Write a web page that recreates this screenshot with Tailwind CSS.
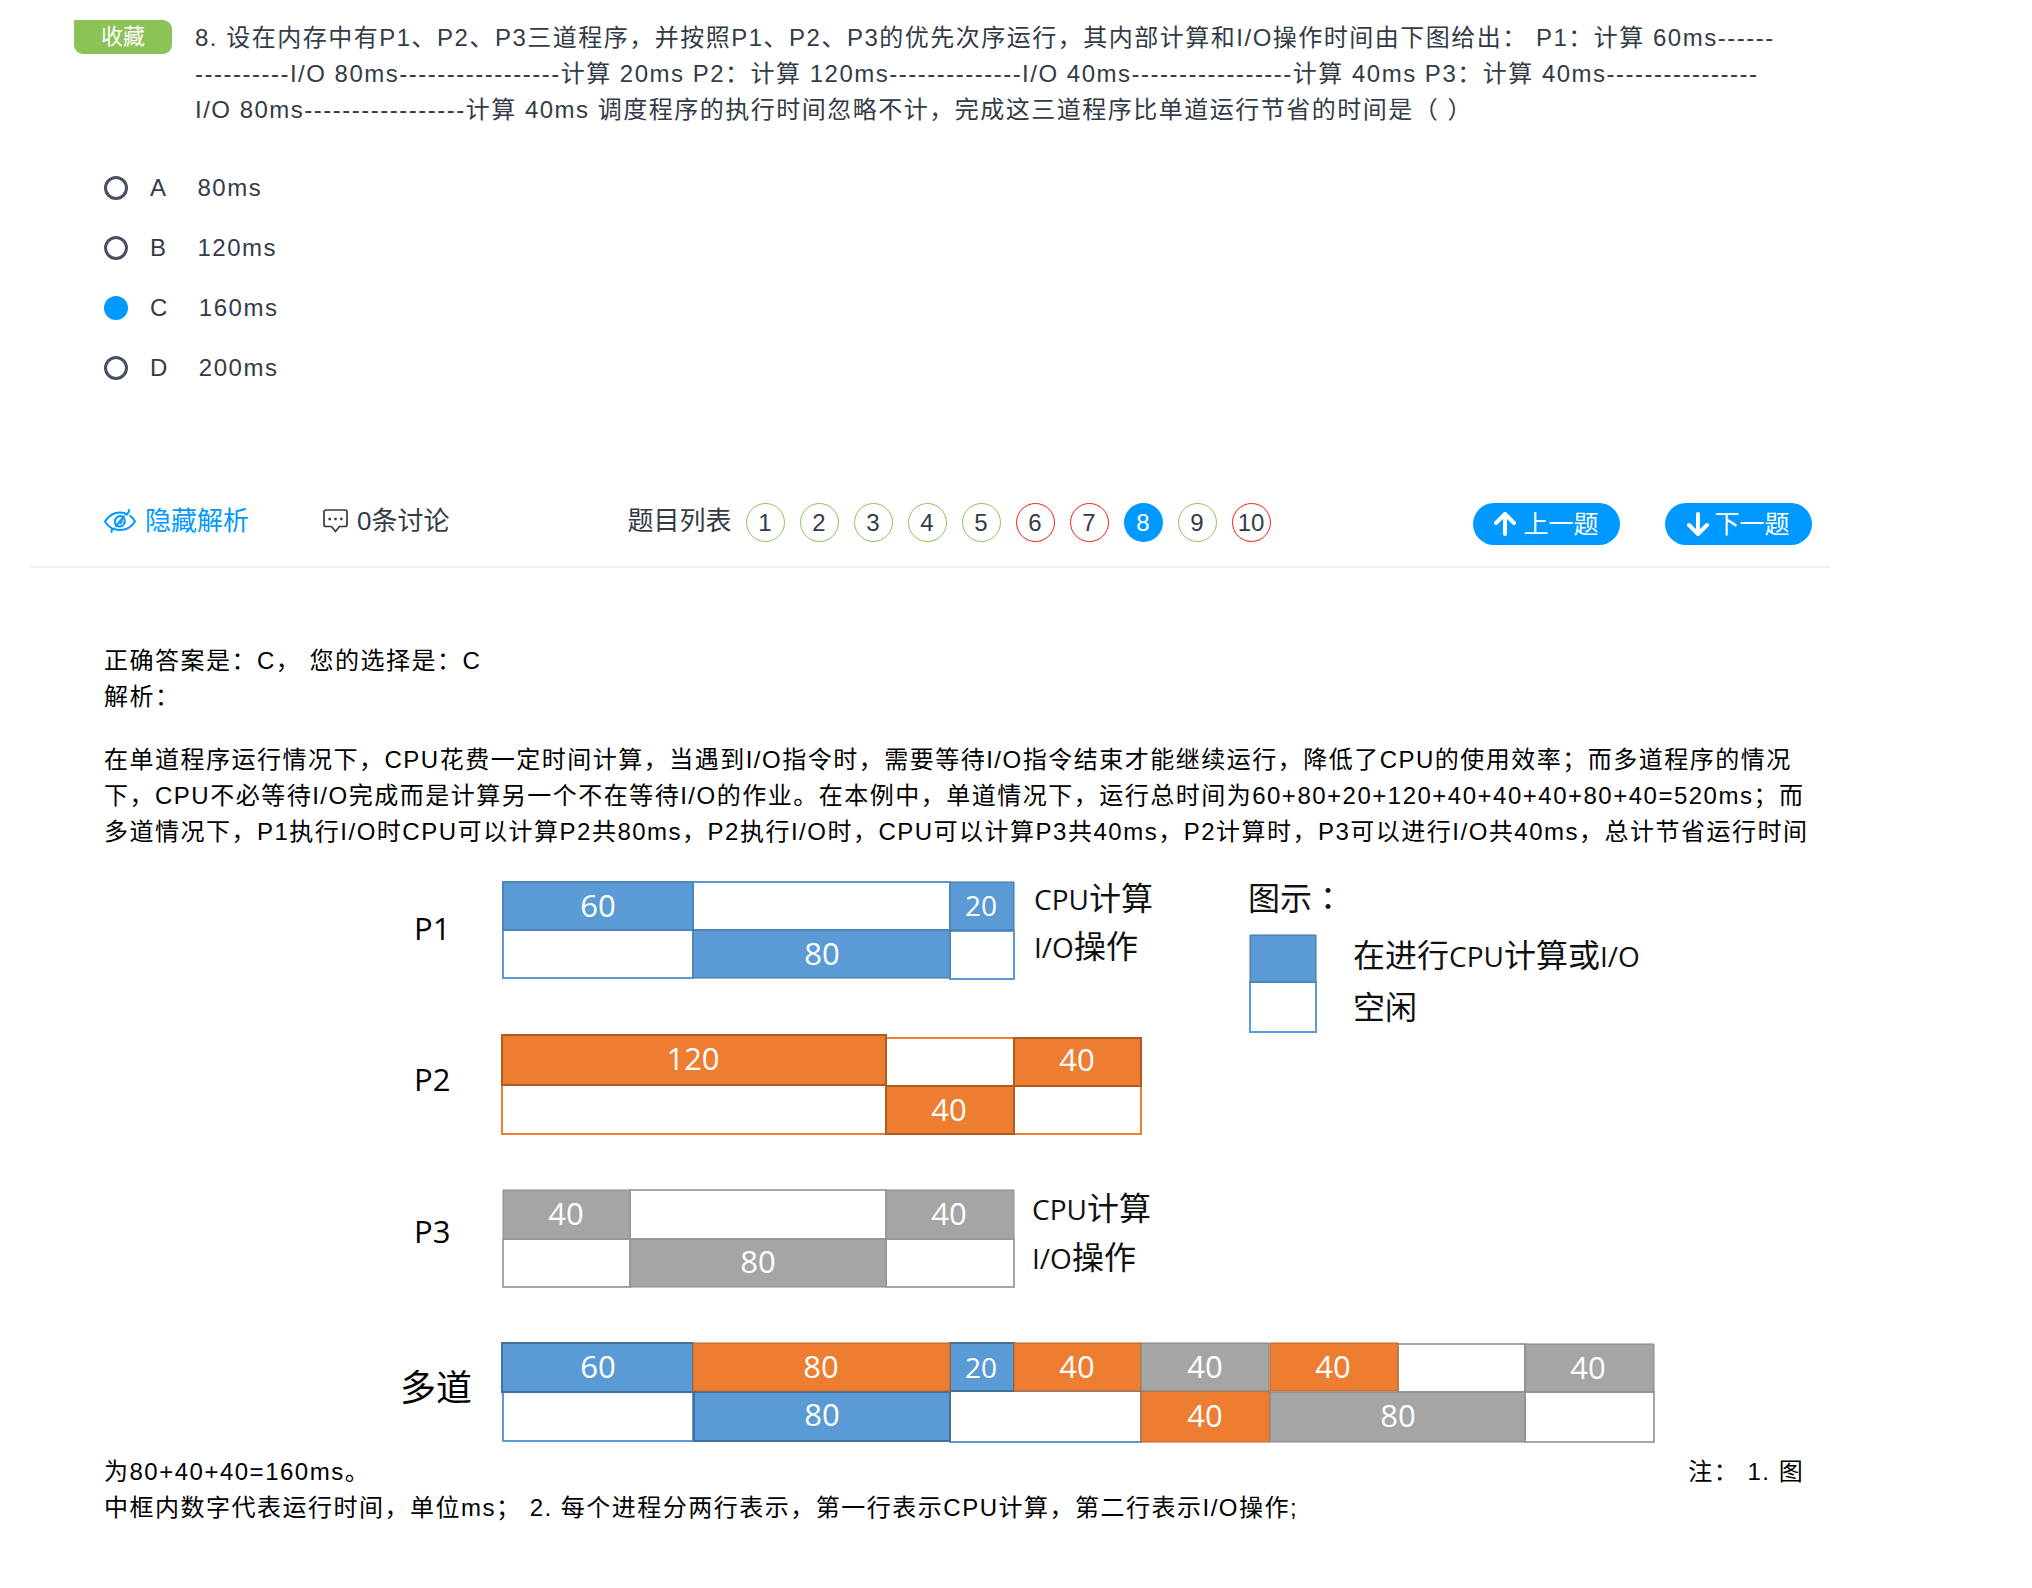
<!DOCTYPE html>
<html lang="zh-CN">
<head>
<meta charset="utf-8">
<meta name="viewport" content="width=device-width, initial-scale=1">
<title>题目解析</title>
<script src="https://cdn.jsdelivr.net/npm/@tailwindcss/browser@4"></script>
</head>
<body class="bg-white font-['Liberation_Sans','Noto_Sans_CJK_SC',sans-serif] text-[24px] leading-9 text-[#333b47]">
<main class="ml-[30px] max-w-[1800px] pb-12 pt-5">

  <!-- Question -->
  <section class="flex items-start gap-[23px] pl-11 pr-[54px]">
    <button type="button" class="h-[34px] w-[98px] shrink-0 rounded-[9px] rounded-tl-none bg-[#8bc356] text-[22px] leading-[34px] text-white">收藏</button>
    <p class="tracking-[0.0625em]">8. 设在内存中有P1、P2、P3三道程序，并按照P1、P2、P3的优先次序运行，其内部计算和I/O操作时间由下图给出： P1：计算 60ms----------------I/O 80ms-----------------计算 20ms P2：计算 120ms--------------I/O 40ms-----------------计算 40ms P3：计算 40ms----------------<wbr>I/O 80ms-----------------计算 40ms 调度程序的执行时间忽略不计，完成这三道程序比单道运行节省的时间是（ ）</p>
  </section>

  <!-- Options -->
  <fieldset class="mt-[42px] flex flex-col gap-6 pl-[74px] tracking-[0.0625em]">
    <label class="flex items-center"><input type="radio" name="answer" class="mr-[22px] size-6 appearance-none rounded-full border-3 border-[#4a5061] checked:border-[#0099ff] checked:bg-[#0099ff]"><span class="mr-[30px]">A</span>80ms</label>
    <label class="flex items-center"><input type="radio" name="answer" class="mr-[22px] size-6 appearance-none rounded-full border-3 border-[#4a5061] checked:border-[#0099ff] checked:bg-[#0099ff]"><span class="mr-[30px]">B</span>120ms</label>
    <label class="flex items-center"><input type="radio" name="answer" checked class="mr-[22px] size-6 appearance-none rounded-full border-3 border-[#4a5061] checked:border-[#0099ff] checked:bg-[#0099ff]"><span class="mr-[30px]">C</span>160ms</label>
    <label class="flex items-center"><input type="radio" name="answer" class="mr-[22px] size-6 appearance-none rounded-full border-3 border-[#4a5061] checked:border-[#0099ff] checked:bg-[#0099ff]"><span class="mr-[30px]">D</span>200ms</label>
  </fieldset>

  <!-- Toolbar -->
  <nav class="mt-[117px] flex h-[65px] items-start border-b-2 border-[#f0f0f0] pl-[74px] pr-[18px] text-[26px]">
    <button type="button" class="flex items-center gap-[9px] text-[#0099ff]">
      <svg class="h-6 w-8" viewBox="0 0 32 24" fill="none" stroke="currentColor" stroke-width="2" stroke-linecap="round"><path d="M23.500 5.500C21.500 4.200 19 3.500 16 3.500 9.500 3.500 4.500 7 1 12.500c1.800 3 4 5.200 6.500 6.700M26 6.800c2 1.500 3.600 3.400 5 5.700C27.500 18 22.500 21 16 21c-2.200 0-4.200-.4-6-1.100M25 1l-.5 2.500-3 2M20 7.500 12 17M10.500 19.500l-2.500 1L7.500 23"/><path d="M18.500 7.500c-4-1.500-7.500 1.500-7.500 5 0 1.200.2 2.200.8 3.100M20.300 9.700c1.500 4-.8 7.800-4.300 7.800-.8 0-1.500-.2-2.100-.5M16.500 14.500l1.500-2.200"/></svg>
      <span>隐藏解析</span>
    </button>
    <a href="#discuss" class="ml-[74px] flex items-center gap-[9px]">
      <svg class="h-6 w-[25px]" viewBox="0 0 25 24" fill="none" stroke="currentColor" stroke-width="1.700" stroke-linejoin="round"><path d="M3 1h19a2 2 0 0 1 2 2v12.500a2 2 0 0 1-2 2h-5.500L12.500 22.500 8.500 17.500H3a2 2 0 0 1-2-2V3a2 2 0 0 1 2-2z"/><path d="M5.500 8.800h2.400v2.400H5.500zM11.300 8.800h2.400v2.400h-2.400zM17.100 8.800h2.400v2.400h-2.400z" fill="currentColor" stroke="none"/></svg>
      <span>0条讨论</span>
    </a>
    <span class="ml-[178px]">题目列表</span>
    <ol class="ml-[14px] flex gap-[15px] text-[24px] leading-[39px]">
      <li><a href="#q1" class="flex size-[39px] items-center justify-center rounded-full border border-[#8bc356]">1</a></li>
      <li><a href="#q2" class="flex size-[39px] items-center justify-center rounded-full border border-[#8bc356]">2</a></li>
      <li><a href="#q3" class="flex size-[39px] items-center justify-center rounded-full border border-[#8bc356]">3</a></li>
      <li><a href="#q4" class="flex size-[39px] items-center justify-center rounded-full border border-[#8bc356]">4</a></li>
      <li><a href="#q5" class="flex size-[39px] items-center justify-center rounded-full border border-[#8bc356]">5</a></li>
      <li><a href="#q6" class="flex size-[39px] items-center justify-center rounded-full border border-[#ff1a1a]">6</a></li>
      <li><a href="#q7" class="flex size-[39px] items-center justify-center rounded-full border border-[#ff1a1a]">7</a></li>
      <li><a href="#q8" class="flex size-[39px] items-center justify-center rounded-full bg-[#0099ff] text-white">8</a></li>
      <li><a href="#q9" class="flex size-[39px] items-center justify-center rounded-full border border-[#8bc356]">9</a></li>
      <li><a href="#q10" class="flex size-[39px] items-center justify-center rounded-full border border-[#ff1a1a]">10</a></li>
    </ol>
    <div class="ml-auto flex gap-[45px] text-[25px] leading-[42px] text-white">
      <button type="button" class="flex h-[42px] w-[147px] items-center justify-center gap-[7px] rounded-full bg-[#0099ff]">
        <svg class="h-6 w-[22px]" viewBox="0 0 22 24" fill="none" stroke="currentColor" stroke-width="4" stroke-linecap="round" stroke-linejoin="round"><path d="M11 22V3M2 11l9-9 9 9"/></svg>
        <span>上一题</span>
      </button>
      <button type="button" class="flex h-[42px] w-[147px] items-center justify-center gap-[5px] rounded-full bg-[#0099ff]">
        <svg class="h-6 w-[22px]" viewBox="0 0 22 24" fill="none" stroke="currentColor" stroke-width="4" stroke-linecap="round" stroke-linejoin="round"><path d="M11 2v19M2 13l9 9 9-9"/></svg>
        <span>下一题</span>
      </button>
    </div>
  </nav>

  <!-- Answer and explanation -->
  <section class="mt-[75px] pl-[74px] pr-[18px] tracking-[0.0625em] text-black">
    <p>正确答案是：C， 您的选择是：C</p>
    <p>解析：</p>
    <p class="mt-[27px]">在单道程序运行情况下，CPU花费一定时间计算，当遇到I/O指令时，需要等待I/O指令结束才能继续运行，降低了CPU的使用效率；而多道程序的情况下，CPU不必等待I/O完成而是计算另一个不在等待I/O的作业。在本例中，单道情况下，运行总时间为60+80+20+120+40+40+40+80+40=520ms；而多道情况下，P1执行I/O时CPU可以计算P2共80ms，P2执行I/O时，CPU可以计算P3共40ms，P2计算时，P3可以进行I/O共40ms，总计节省运行时间<span>为80+40+40=160ms。</span><svg class="inline h-[630px] w-[1310px] align-baseline font-['Open_Sans','Noto_Sans_CJK_SC',sans-serif] text-[31px] tracking-normal" viewBox="-30 0 1310 630" role="img" aria-label="程序运行时间图">
      <!-- P1 -->
      <g fill="#fff" stroke="#5b9bd5" stroke-width="2">
        <path d="M103 32h190v48H103zM293 32h257v48H293zM103 80h190v48H103zM550 81h64v48h-64z"/>
        <path d="M103 32h190v48H103zM293 80h257v48H293zM550 32h64v48h-64z" fill="#5b9bd5" stroke="#41719c" stroke-width="1"/>
      </g>
      <!-- P2 -->
      <g fill="#fff" stroke="#ed7d31" stroke-width="2">
        <path d="M102 235h384v49H102zM486 188h128v48H486zM614 236h127v48H614z"/>
        <path d="M102 185h384v50H102zM614 188h127v48H614zM486 236h128v48H486z" fill="#ed7d31" stroke="#ae5a21"/>
      </g>
      <!-- P3 -->
      <g fill="#fff" stroke="#a5a5a5" stroke-width="2">
        <path d="M230 340h256v49H230zM103 389h127v48H103zM486 389h128v48H486z"/>
        <path d="M103 340h127v49H103zM486 340h128v49H486zM230 389h256v48H230z" fill="#a5a5a5" stroke="#8c8c8c" stroke-width="1"/>
      </g>
      <!-- Multiprogramming -->
      <g stroke-width="2">
        <path d="M103 541h190v50H103zM550 541h191v51H550z" fill="#fff" stroke="#5b9bd5"/>
        <path d="M998 494h127v48H998zM1125 542h129v50h-129z" fill="#fff" stroke="#a5a5a5"/>
        <path d="M102 493h191v49H102zM294 542h256v49H294z" fill="#5b9bd5" stroke="#41719c"/>
        <path d="M550 493h64v48h-64z" fill="#5b9bd5" stroke="#41719c"/>
        <path d="M293 493h257v48H293zM614 493h127v48H614zM870 493h128v48H870zM741 541h129v51H741z" fill="#ed7d31" stroke="#b9642b" stroke-width="1"/>
        <path d="M741 493h128v48H741zM870 542h255v50H870zM1125 494h129v48h-129z" fill="#a5a5a5" stroke="#838383" stroke-width="1"/>
      </g>
      <!-- Legend -->
      <path d="M850 132h66v50h-66z" fill="#fff" stroke="#5b9bd5" stroke-width="2"/>
      <path d="M850 85h66v47h-66z" fill="#5b9bd5" stroke="#41719c"/>

      <g fill="#fff" text-anchor="middle" class="font-medium">
        <text x="198" y="67">60</text><text x="422" y="115">80</text>
        <text x="293" y="220">120</text><text x="677" y="221">40</text><text x="549" y="271">40</text>
        <text x="166" y="375">40</text><text x="549" y="375">40</text><text x="358" y="423">80</text>
        <text x="198" y="528">60</text><text x="421" y="528">80</text><text x="677" y="528">40</text><text x="805" y="528">40</text><text x="933" y="528">40</text><text x="1188" y="529">40</text>
        <text x="422" y="576">80</text><text x="805" y="577">40</text><text x="998" y="577">80</text>
      </g>
      <g fill="#fff" text-anchor="middle" class="text-[28px]">
        <text x="581" y="66">20</text><text x="581" y="528">20</text>
      </g>
      <text x="14" y="90">P1</text>
      <text x="14" y="241">P2</text>
      <text x="14" y="393">P3</text>
      <text x="0" y="551" class="text-[36px]">多道</text>
      <g class="text-[32px]" fill="#111">
        <text x="634" y="60"><tspan class="text-[28px]">CPU</tspan>计算</text>
        <text x="634" y="108"><tspan class="text-[28px]">I/O</tspan>操作</text>
        <text x="632" y="370"><tspan class="text-[28px]">CPU</tspan>计算</text>
        <text x="632" y="419"><tspan class="text-[28px]">I/O</tspan>操作</text>
        <text x="848" y="60">图示<tspan lang="zh-TW" class="font-['Noto_Sans_CJK_TC',sans-serif]">：</tspan></text>
        <text x="953" y="117">在进行<tspan class="text-[28px]">CPU</tspan>计算或<tspan class="text-[28px]">I/O</tspan></text>
        <text x="953" y="169">空闲</text>
      </g>
    </svg> 注： 1. 图中框内数字代表运行时间，单位ms； 2. 每个进程分两行表示，第一行表示CPU计算，第二行表示I/O操作;</p>
  </section>
</main>
</body>
</html>
